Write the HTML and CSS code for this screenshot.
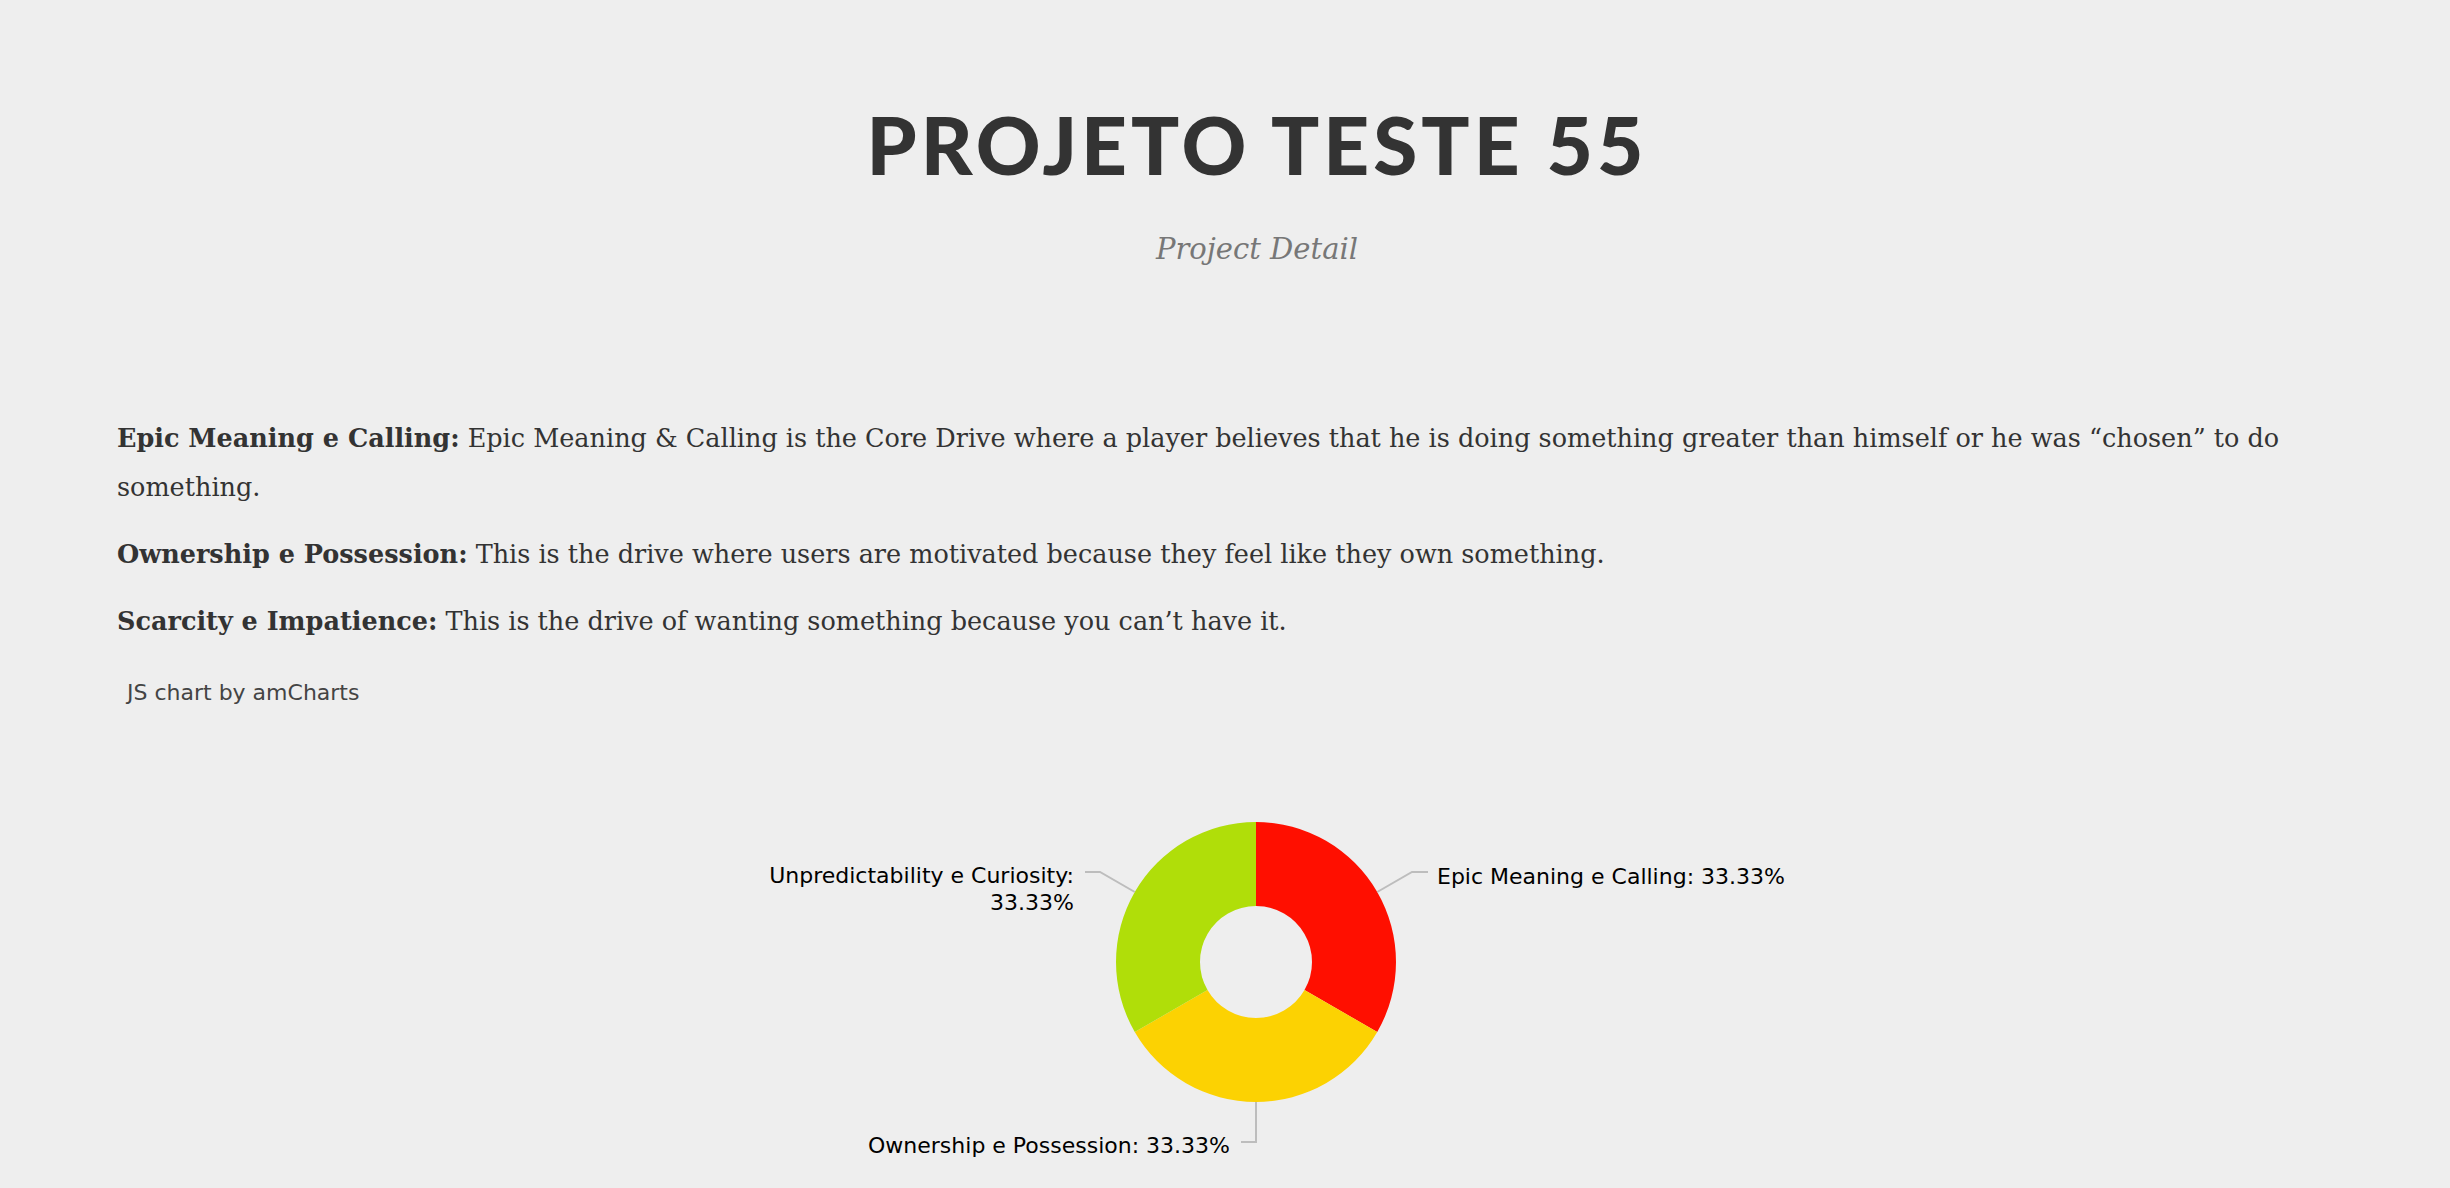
FILE: index.html
```html
<!DOCTYPE html>
<html lang="pt">
<head>
<meta charset="utf-8">
<title>Projeto Teste 55</title>
<link rel="stylesheet" href="styles.css">
</head>
<body>
<div class="page">
  <header class="head">
    <h1 class="title">PROJETO TESTE 55</h1>
    <p class="subtitle">Project Detail</p>
  </header>
  <section class="desc">
    <p class="drive"><strong>Epic Meaning e Calling:</strong> Epic Meaning &amp; Calling is the Core Drive where a player believes that he is doing something greater than himself or he was “chosen” to do something.</p>
    <p class="drive"><strong>Ownership e Possession:</strong> This is the drive where users are motivated because they feel like they own something.</p>
    <p class="drive"><strong>Scarcity e Impatience:</strong> This is the drive of wanting something because you can’t have it.</p>
  </section>
  <div class="chart">
    <a class="credit">JS chart by amCharts</a>
    <svg class="chart-svg" viewBox="0 0 2280 513" width="2280" height="513" xmlns="http://www.w3.org/2000/svg">
      <path d="M1139,149 A140,140 0 0 1 1260.24,359 L1187.5,317 A56,56 0 0 0 1139,233 Z" fill="#FF0F00"/>
      <path d="M1260.24,359 A140,140 0 0 1 1017.76,359 L1090.5,317 A56,56 0 0 0 1187.5,317 Z" fill="#FCD202"/>
      <path d="M1017.76,359 A140,140 0 0 1 1139,149 L1139,233 A56,56 0 0 0 1090.5,317 Z" fill="#B0DE09"/>
      <g fill="none" stroke="#bdbdbd" stroke-width="2">
        <polyline points="1260.24,219 1295,199 1311,199"/>
        <polyline points="1017.76,219 983,199 968,199"/>
        <polyline points="1139,429 1139,469 1124,469"/>
      </g>
      <g class="labels">
        <text x="1320" y="211">Epic Meaning e Calling: 33.33%</text>
        <text x="957" y="210" text-anchor="end">Unpredictability e Curiosity:</text>
        <text x="957" y="237" text-anchor="end">33.33%</text>
        <text x="1113" y="480" text-anchor="end">Ownership e Possession: 33.33%</text>
      </g>
    </svg>
  </div>
</div>
</body>
</html>
```

FILE: styles.css
```css
html, body {
  margin: 0;
  padding: 0;
  background: #eeeeee;
}

.page {
  margin: 0 53px 0 117px;
}

.head {
  text-align: center;
  padding-top: 104px;
}

.title {
  margin: 0;
  font-family: "Lato", "DejaVu Sans", sans-serif;
  font-weight: 900;
  font-size: 80px;
  line-height: 80px;
  color: #333333;
  letter-spacing: 4px;
}

.subtitle {
  margin: 50px 0 0;
  font-family: "DejaVu Serif", serif;
  font-style: italic;
  font-size: 29px;
  line-height: 30px;
  color: #777777;
}

.desc {
  margin-top: 150px;
  max-width: 2200px;
}

.drive {
  margin: 0 0 18px;
  font-family: "DejaVu Serif", serif;
  font-size: 25.5px;
  line-height: 49px;
  color: #333333;
}

.drive strong {
  font-weight: 700;
}

.chart {
  position: relative;
  margin-top: 27px;
}

.credit {
  position: absolute;
  left: 10px;
  top: 7px;
  font-family: "DejaVu Sans", Verdana, sans-serif;
  font-size: 22px;
  color: #444444;
  text-decoration: none;
}

.chart-svg {
  display: block;
}

.labels text {
  font-family: "DejaVu Sans", Verdana, sans-serif;
  font-size: 22px;
  fill: #000000;
}
```
